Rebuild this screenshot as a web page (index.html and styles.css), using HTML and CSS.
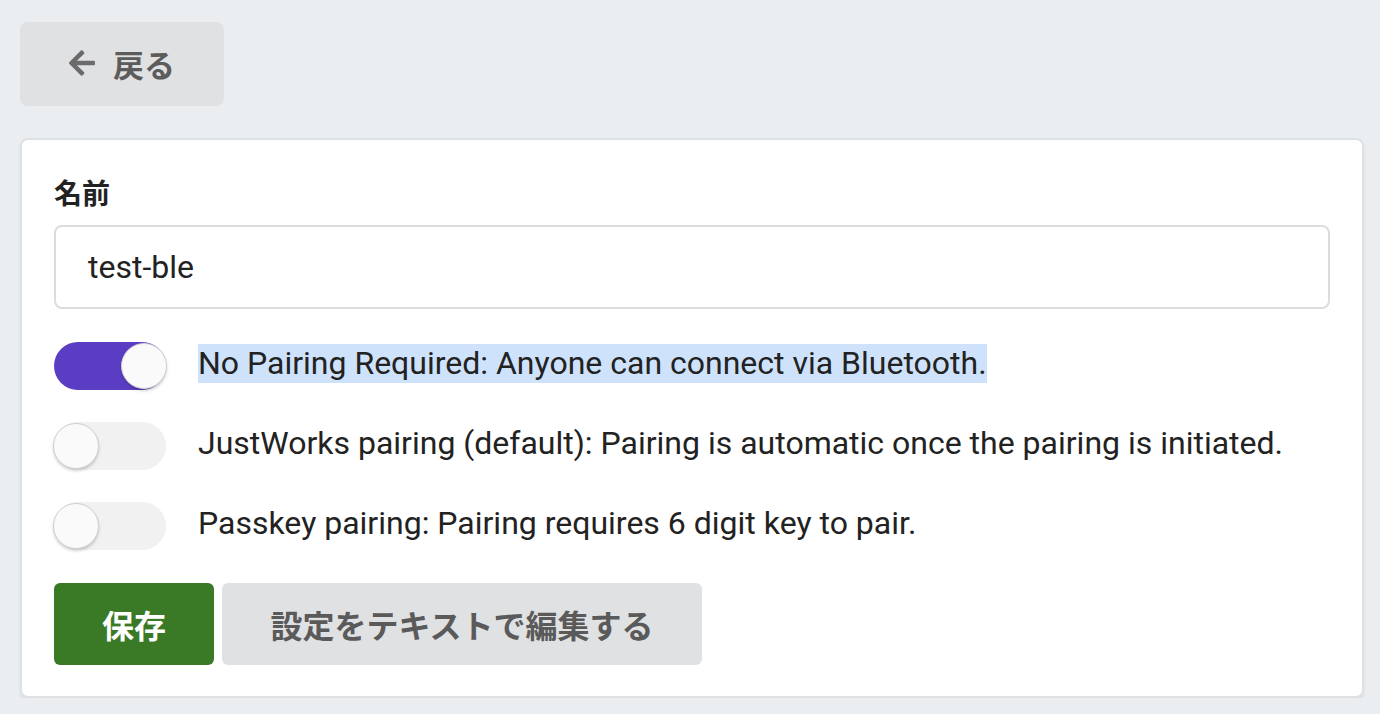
FILE: index.html
```html
<!DOCTYPE html>
<html lang="ja">
<head>
<meta charset="utf-8">
<link rel="stylesheet" href="styles.css">
</head>
<body>
<div class="page">
  <button class="back-btn">
    <svg class="back-icon" viewBox="0 0 448 512" width="26" height="30"><path fill="#6b6b6b" d="M257.5 445.1l-22.2 22.2c-9.4 9.4-24.6 9.4-33.9 0L7 273c-9.4-9.4-9.4-24.6 0-33.9L201.4 44.7c9.4-9.4 24.6-9.4 33.9 0l22.2 22.2c9.5 9.5 9.3 25-.4 34.3L136.6 216H424c13.3 0 24 10.7 24 24v32c0 13.3-10.7 24-24 24H136.6l120.5 114.8c9.8 9.3 10 24.8.4 34.3z"/></svg>
    <span>戻る</span>
  </button>
  <div class="card">
    <label class="field-label">名前</label>
    <div class="input">test-ble</div>
    <div class="options">
      <div class="option">
        <span class="toggle on"><span class="knob"></span></span>
        <span class="opt-text selected">No Pairing Required: Anyone can connect via Bluetooth.</span>
      </div>
      <div class="option">
        <span class="toggle"><span class="knob"></span></span>
        <span class="opt-text">JustWorks pairing (default): Pairing is automatic once the pairing is initiated.</span>
      </div>
      <div class="option">
        <span class="toggle"><span class="knob"></span></span>
        <span class="opt-text">Passkey pairing: Pairing requires 6 digit key to pair.</span>
      </div>
    </div>
    <div class="actions">
      <button class="btn save">保存</button>
      <button class="btn edit">設定をテキストで編集する</button>
    </div>
  </div>
</div>
</body>
</html>
```
FILE: styles.css
```css
html, body {
  margin: 0;
  padding: 0;
  background: #ebeef0;
  font-family: Roboto, "Noto Sans CJK JP", sans-serif;
  color: #222;
}
.page {
  padding: 22px 16px 0 20px;
  display: flex;
  flex-direction: column;
  align-items: flex-start;
}
.back-btn {
  width: 204px;
  height: 84px;
  border: none;
  border-radius: 8px;
  background: #e0e1e3;
  display: flex;
  align-items: center;
  justify-content: center;
  gap: 18px;
  font-family: "Noto Sans CJK JP", sans-serif;
  font-weight: 700;
  font-size: 31px;
  color: #5c5c5c;
  padding: 0 0 2px 0;
  margin-bottom: 32px;
}
.back-icon { display: block; }
.card {
  align-self: stretch;
  background: #fff;
  border: 2px solid #dfe1e3;
  border-radius: 8px;
  box-shadow: 0 2px 3px rgba(0,0,0,0.08);
  padding: 34px 32px 31px 32px;
  display: flex;
  flex-direction: column;
}
.field-label {
  font-family: "Noto Sans CJK JP", sans-serif;
  font-weight: 700;
  font-size: 28px;
  line-height: 36px;
  color: #222;
  margin-bottom: 15px;
}
.input {
  height: 80px;
  border: 2px solid #dcdcdc;
  border-radius: 8px;
  padding: 0 32px;
  display: flex;
  align-items: center;
  font-size: 32px;
  color: #222;
}
.options {
  display: flex;
  flex-direction: column;
  gap: 32px;
  margin-top: 33px;
}
.option {
  display: flex;
  align-items: center;
  gap: 32px;
  height: 48px;
}
.toggle {
  position: relative;
  width: 112px;
  height: 48px;
  border-radius: 24px;
  background: #f1f1f1;
  flex: none;
}
.toggle.on { background: #5b3dc4; }
.knob {
  position: absolute;
  top: 1px;
  left: -1px;
  width: 44px;
  height: 44px;
  border-radius: 50%;
  background: #fafafa;
  border: 1px solid #d0d0d0;
  box-shadow: 0 2px 3px rgba(0,0,0,0.18);
}
.toggle.on .knob { left: 67px; }
.opt-text {
  font-size: 32px;
  line-height: 39px;
  color: #222;
  margin-bottom: 6px;
}
.opt-text.selected { background: #cfe2fb; }
.actions {
  display: flex;
  gap: 8px;
  margin-top: 33px;
}
.btn {
  height: 82px;
  border: none;
  border-radius: 6px;
  font-family: "Noto Sans CJK JP", sans-serif;
  font-weight: 700;
  font-size: 32px;
  padding: 0;
}
.btn.save {
  width: 160px;
  background: #3a7a27;
  color: #fff;
}
.btn.edit {
  width: 480px;
  background: #e0e1e3;
  color: #5a5a5a;
}
```
